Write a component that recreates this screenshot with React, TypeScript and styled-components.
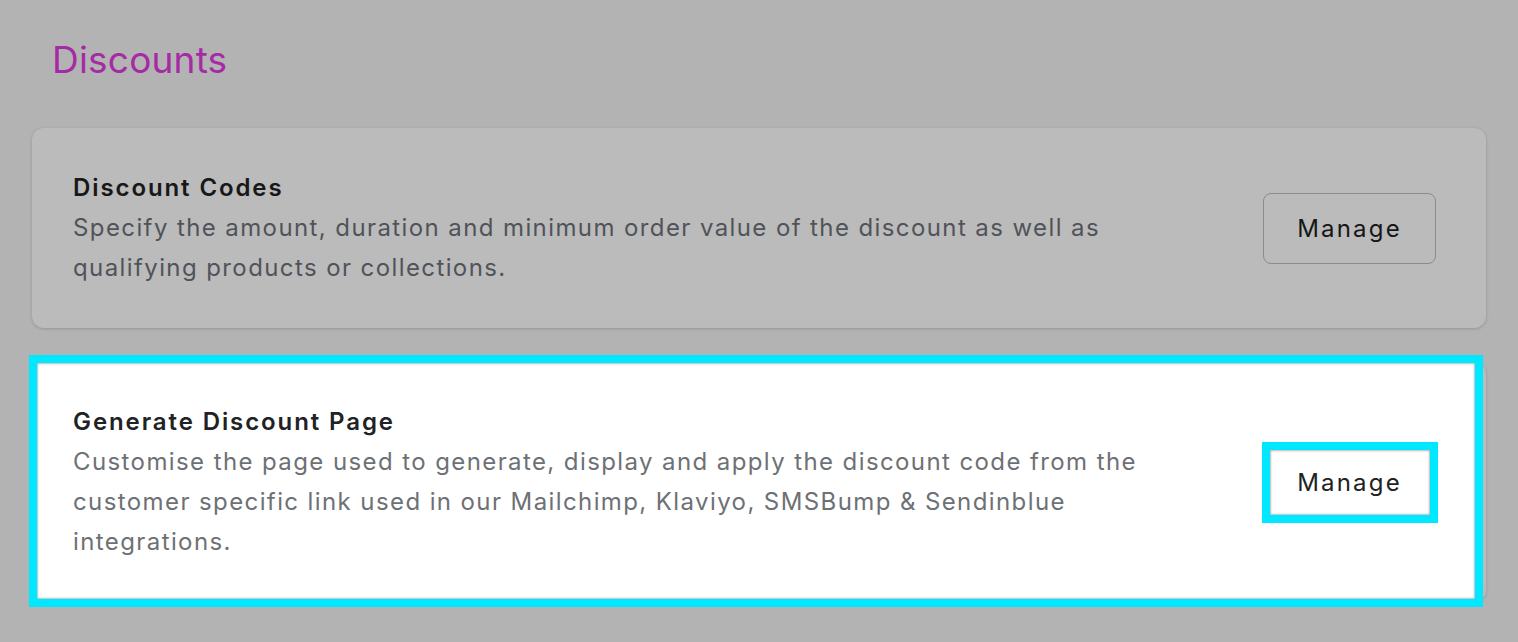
import styled, { createGlobalStyle } from "styled-components";

const GlobalStyle = createGlobalStyle`
    html, body {
        margin: 0;
        background: #b3b3b3;
    }
    body {
        font-family: Inter, "Noto Sans", sans-serif;
        -webkit-font-smoothing: antialiased;
    }
`;

const Page = styled.div`
    padding: 34px 32px 40px;
    display: flex;
    flex-direction: column;
`;

const Heading = styled.h1`
    margin: 0 0 42px 20px;
    font-size: 37px;
    line-height: 52px;
    font-weight: 400;
    letter-spacing: 0.2px;
    color: #a62aa6;
`;

const CardList = styled.div`
    display: flex;
    flex-direction: column;
    gap: 34px;
`;

const Card = styled.div`
    position: relative;
    display: flex;
    align-items: center;
    gap: 60px;
    padding: 40px 50px 40px 41px;
    background: #bbbbbb;
    border-radius: 12px;
    box-shadow: 0 0 5px rgba(0, 0, 0, 0.04), 0 1px 3px rgba(0, 0, 0, 0.14);
`;

// the tour spotlight sitting over the card
const HighlightCard = styled(Card)`
    &::before {
        content: "";
        position: absolute;
        top: 1px;
        left: 5px;
        right: 11px;
        bottom: 3px;
        background: #ffffff;
        box-shadow: 0 0 0 8px #00e8ff, inset 0 0 2px 1px rgba(0, 0, 0, 0.28);
    }
    & > * {
        position: relative;
        z-index: 1;
    }
`;

const Body = styled.div`
    flex: 1;
    display: flex;
    flex-direction: column;
`;

const Title = styled.div<{ $lit?: boolean }>`
    font-size: 24px;
    line-height: 40px;
    font-weight: 600;
    letter-spacing: 1.9px;
    color: ${(p) => (p.$lit ? "#202223" : "#181818")};
`;

const Text = styled.div<{ $lit?: boolean }>`
    font-size: 24px;
    line-height: 40px;
    font-weight: 400;
    letter-spacing: 1.4px;
    color: ${(p) => (p.$lit ? "#6d7175" : "#50535a")};
`;

const ActionSlot = styled.div`
    width: 173px;
    display: flex;
    justify-content: center;
    align-items: center;
`;

const ManageButton = styled.button`
    width: 173px;
    height: 71px;
    padding: 0;
    border: 1.5px solid #8a8c8f;
    border-radius: 8px;
    background: transparent;
    font-family: inherit;
    font-size: 24px;
    letter-spacing: 2.2px;
    color: #161616;
    cursor: pointer;
`;

const LitButton = styled(ManageButton)`
    width: 160px;
    height: 65px;
    border: none;
    border-radius: 0;
    background: #ffffff;
    color: #202223;
    box-shadow: 0 0 0 8px #00e8ff, inset 0 0 2px 1px rgba(0, 0, 0, 0.28);
`;

export default () => {
    return (
        <Page>
            <GlobalStyle />
            <Heading>Discounts</Heading>
            <CardList>
                <Card>
                    <Body>
                        <Title>Discount Codes</Title>
                        <Text>
                            Specify the amount, duration and minimum order value of the
                            discount as well as qualifying products or collections.
                        </Text>
                    </Body>
                    <ActionSlot>
                        <ManageButton>Manage</ManageButton>
                    </ActionSlot>
                </Card>
                <HighlightCard>
                    <Body>
                        <Title $lit>Generate Discount Page</Title>
                        <Text $lit>
                            Customise the page used to generate, display and apply the
                            discount code from the customer specific link used in our
                            Mailchimp, Klaviyo, SMSBump &amp; Sendinblue integrations.
                        </Text>
                    </Body>
                    <ActionSlot>
                        <LitButton>Manage</LitButton>
                    </ActionSlot>
                </HighlightCard>
            </CardList>
        </Page>
    );
};
